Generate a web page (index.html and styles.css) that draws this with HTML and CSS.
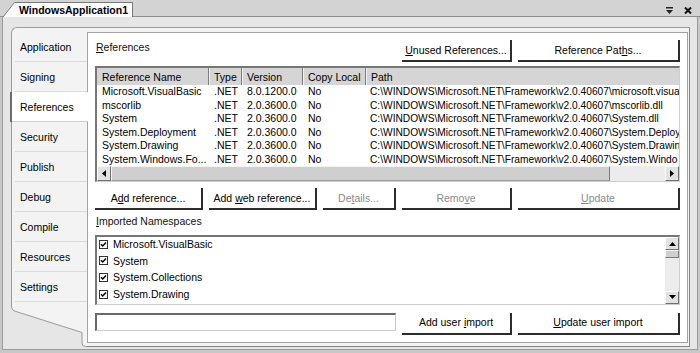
FILE: index.html
```html
<!DOCTYPE html>
<html lang="en">
<head>
    <meta charset="UTF-8">
    <meta name="viewport" content="width=device-width, initial-scale=1.0">
    <title>WindowsApplication1</title>
    <link rel="stylesheet" href="styles.css">
</head>
<body>
<div class="doc-bar">
    <div class="doc-tab">
        <svg class="doc-tab-slant" width="12" height="15" viewBox="0 0 12 15">
            <path d="M0 15 L11.5 0 H12 V15 Z" fill="#fbfbfb"/>
            <path d="M0 15 L11.5 0.5 H12" fill="none" stroke="#7a7a7a"/>
        </svg>
        WindowsApplication1
    </div>
    <div class="doc-tools">
        <svg width="7" height="7" viewBox="0 0 7 7">
            <rect x="0" y="0" width="7" height="1.5" fill="#222"/>
            <path d="M0 3 H7 L3.5 7 Z" fill="#222"/>
        </svg>
        <svg width="8" height="7" viewBox="0 0 8 7">
            <path d="M1 0.5 L7 6.5 M7 0.5 L1 6.5" stroke="#111" stroke-width="2"/>
        </svg>
    </div>
</div>

<div class="frame">
    <div class="designer">
        <ul class="side-tabs">
            <li class="first">Application</li>
            <li>Signing</li>
            <li class="selected">References</li>
            <li>Security</li>
            <li>Publish</li>
            <li>Debug</li>
            <li>Compile</li>
            <li>Resources</li>
            <li>Settings</li>
            <li class="side-tail">
                <svg width="76" height="45" viewBox="0 0 76 45">
                    <path d="M0 0 H1 V4 Q1 8 5 9 L71 30 Q71.5 30.2 71.5 31 V41 Q71.5 44 74.5 44 H76 V45 H0 Z" fill="#e6e6e6"/>
                    <path d="M0.5 0 V4 Q0.5 8.5 5 9.5 L71 30.5 V41 Q71 44.5 74.5 44.5 H76" fill="none" stroke="#9c9c9c"/>
                </svg>
            </li>
        </ul>

        <div class="panel">
            <div class="panel-head">
                <span class="group-label"><u>R</u>eferences</span>
                <div class="btn-group">
                    <button class="btn btn-lg"><u>U</u>nused References...</button>
                    <button class="btn btn-xl">Reference Pat<u>h</u>s...</button>
                </div>
            </div>

            <div class="ref-list">
                <table class="ref-table">
                    <colgroup>
                        <col style="width: 112px">
                        <col style="width: 33px">
                        <col style="width: 61px">
                        <col style="width: 63px">
                        <col>
                    </colgroup>
                    <thead>
                        <tr><th>Reference Name</th><th>Type</th><th>Version</th><th>Copy Local</th><th>Path</th></tr>
                    </thead>
                    <tbody>
                        <tr><td>Microsoft.VisualBasic</td><td>.NET</td><td>8.0.1200.0</td><td>No</td><td>C:\WINDOWS\Microsoft.NET\Framework\v2.0.40607\microsoft.visua</td></tr>
                        <tr><td>mscorlib</td><td>.NET</td><td>2.0.3600.0</td><td>No</td><td>C:\WINDOWS\Microsoft.NET\Framework\v2.0.40607\mscorlib.dll</td></tr>
                        <tr><td>System</td><td>.NET</td><td>2.0.3600.0</td><td>No</td><td>C:\WINDOWS\Microsoft.NET\Framework\v2.0.40607\System.dll</td></tr>
                        <tr><td>System.Deployment</td><td>.NET</td><td>2.0.3600.0</td><td>No</td><td>C:\WINDOWS\Microsoft.NET\Framework\v2.0.40607\System.Deploy</td></tr>
                        <tr><td>System.Drawing</td><td>.NET</td><td>2.0.3600.0</td><td>No</td><td>C:\WINDOWS\Microsoft.NET\Framework\v2.0.40607\System.Drawin</td></tr>
                        <tr><td>System.Windows.Fo...</td><td>.NET</td><td>2.0.3600.0</td><td>No</td><td>C:\WINDOWS\Microsoft.NET\Framework\v2.0.40607\System.Windo</td></tr>
                    </tbody>
                </table>
                <div class="hscroll">
                    <span class="sb-btn"><svg width="4" height="7" viewBox="0 0 4 7"><path d="M4 0 V7 L0 3.5 Z"/></svg></span>
                    <span class="sb-thumb"></span>
                    <span class="sb-track"></span>
                    <span class="sb-btn"><svg width="4" height="7" viewBox="0 0 4 7"><path d="M0 0 V7 L4 3.5 Z"/></svg></span>
                </div>
            </div>

            <div class="btn-row">
                <button class="btn btn-md">A<u>d</u>d reference...</button>
                <button class="btn btn-md">Add <u>w</u>eb reference...</button>
                <button class="btn btn-sm disabled">De<u>t</u>ails...</button>
                <button class="btn btn-lg disabled">Remo<u>v</u>e</button>
                <button class="btn btn-xl disabled"><u>U</u>pdate</button>
            </div>

            <div class="group-label ns-label"><u>I</u>mported Namespaces</div>

            <div class="ns-list">
                <ul class="ns-items">
                    <li><svg class="check" width="9" height="9" viewBox="0 0 9 9"><rect x="0.5" y="0.5" width="8" height="8" fill="#fff" stroke="#333"/><path d="M2 4.2 L3.7 6 L7 2.5" fill="none" stroke="#000" stroke-width="1.5"/></svg>Microsoft.VisualBasic</li>
                    <li><svg class="check" width="9" height="9" viewBox="0 0 9 9"><rect x="0.5" y="0.5" width="8" height="8" fill="#fff" stroke="#333"/><path d="M2 4.2 L3.7 6 L7 2.5" fill="none" stroke="#000" stroke-width="1.5"/></svg>System</li>
                    <li><svg class="check" width="9" height="9" viewBox="0 0 9 9"><rect x="0.5" y="0.5" width="8" height="8" fill="#fff" stroke="#333"/><path d="M2 4.2 L3.7 6 L7 2.5" fill="none" stroke="#000" stroke-width="1.5"/></svg>System.Collections</li>
                    <li><svg class="check" width="9" height="9" viewBox="0 0 9 9"><rect x="0.5" y="0.5" width="8" height="8" fill="#fff" stroke="#333"/><path d="M2 4.2 L3.7 6 L7 2.5" fill="none" stroke="#000" stroke-width="1.5"/></svg>System.Drawing</li>
                </ul>
                <div class="vscroll">
                    <span class="sb-btn"><svg width="7" height="4" viewBox="0 0 7 4"><path d="M0 4 H7 L3.5 0 Z"/></svg></span>
                    <span class="sb-thumb"></span>
                    <span class="sb-track"></span>
                    <span class="sb-btn"><svg width="7" height="4" viewBox="0 0 7 4"><path d="M0 0 H7 L3.5 4 Z"/></svg></span>
                </div>
            </div>

            <div class="btn-row import-row">
                <input type="text" class="import-box">
                <button class="btn btn-lg">Add user <u>i</u>mport</button>
                <button class="btn btn-xl"><u>U</u>pdate user import</button>
            </div>
        </div>
    </div>
</div>
</body>
</html>
```

FILE: styles.css
```css
body {
    margin: 0;
    width: 700px;
    height: 353px;
    overflow: hidden;
    background-color: #c8c8c8;
    font-family: "Liberation Sans", Arial, sans-serif;
    font-size: 10.5px;
    color: #000;
}

u {
    text-decoration: underline;
}

/* document tab strip */
.doc-bar {
    display: flex;
    align-items: flex-start;
    height: 16px;
    background-color: #d3d3d3;
    border-bottom: 1px solid #8e8e8e;
}

.doc-tab {
    position: relative;
    height: 15px;
    margin: 2px 0 -1px 15px;
    padding: 0 4px;
    background-color: #fbfbfb;
    border-top: 1px solid #7a7a7a;
    border-right: 1px solid #7a7a7a;
    box-sizing: border-box;
    font-weight: bold;
    line-height: 14px;
}

.doc-tab-slant {
    position: absolute;
    left: -12px;
    top: -1px;
    display: block;
}

.doc-tools {
    display: flex;
    gap: 11px;
    margin-left: auto;
    padding: 7px 8px 0 0;
}

.doc-tools svg {
    display: block;
}

/* designer frame */
.frame {
    margin: 0 2px;
    padding: 10px 7px 2px 8px;
    background-color: #e6e6e6;
    border: 1px solid #9c9c9c;
    border-top: none;
}

.designer {
    display: flex;
    height: 320px;
    box-sizing: border-box;
    padding: 0 1px 3px 0;
    background-color: #f3f3f3;
    border: 1px solid #9c9c9c;
    border-right-color: #868686;
    border-bottom-color: #868686;
    border-top-left-radius: 6px;
}

.side-tabs {
    display: flex;
    flex-direction: column;
    width: 75px;
    flex-shrink: 0;
    margin: 0;
    padding: 0;
    list-style: none;
}

.side-tabs li {
    height: 30px;
    padding-left: 8px;
    line-height: 30px;
    box-sizing: border-box;
    background: linear-gradient(#dadada, #dadada) 3px 100% / calc(100% - 3px) 1px no-repeat;
}

.side-tabs li.first {
    height: 34px;
    padding-top: 4px;
}

.side-tabs li.selected {
    position: relative;
    z-index: 1;
    margin: 0 -1px 0 -2px;
    background-color: #fff;
    border-left: 2px solid #6c6c6c;
    box-shadow: inset 0 -1px #d0d0d0;
}

.side-tabs li.side-tail {
    flex: 1;
    height: auto;
    padding: 0;
    margin: 0 0 -4px -1px;
    background: none;
}

.side-tail svg {
    display: block;
}

/* property page */
.panel {
    flex: 1;
    display: flex;
    flex-direction: column;
    margin-top: 4px;
    padding: 0 7px;
    background-color: #fff;
    border: 1px solid #a3a3a3;
}

.panel-head {
    display: flex;
    margin-top: 7px;
}

.group-label {
    padding-left: 1px;
    line-height: 14px;
    color: #111;
}

.btn-group {
    display: flex;
    gap: 6px;
    margin-left: auto;
}

.btn {
    height: 22px;
    padding: 0 0 1px 0;
    background-color: #fff;
    border: none;
    border-right: 2px solid #2c2c2c;
    border-bottom: 2px solid #2c2c2c;
    font: inherit;
    color: #000;
    text-align: center;
    box-sizing: border-box;
}

.btn.disabled {
    color: #8a8a8a;
}

.btn-sm { width: 73px; }
.btn-md { width: 108px; }
.btn-lg { width: 110px; }
.btn-xl { width: 162px; }

.btn-row {
    display: flex;
    gap: 6px;
    margin-top: 6px;
}

/* references list */
.ref-list {
    margin-top: 4px;
    border-top: 2px solid #767676;
    border-left: 2px solid #767676;
    border-right: 1px solid #cfcfcf;
    border-bottom: 1px solid #cfcfcf;
    overflow: hidden;
}

.ref-table {
    width: 100%;
    table-layout: fixed;
    border-spacing: 0;
}

.ref-table th,
.ref-table td {
    padding: 0 0 0 5px;
    white-space: nowrap;
    overflow: hidden;
    text-align: left;
}

.ref-table th {
    height: 17px;
    font-weight: normal;
    background-color: #d5d5d5;
    box-shadow: inset -1px 0 #7e7e7e, inset 1px 0 #f2f2f2;
}

.ref-table th:first-child {
    box-shadow: inset -1px 0 #7e7e7e;
}

.ref-table th:last-child {
    box-shadow: inset 1px 0 #f2f2f2;
}

.ref-table td {
    height: 13.5px;
    line-height: 13.5px;
}

.ref-table td:last-child {
    font-size: 10.2px;
    padding-left: 4px;
}

.hscroll {
    display: flex;
    height: 15px;
}

.sb-btn {
    display: flex;
    align-items: center;
    justify-content: center;
    width: 14px;
    box-sizing: border-box;
    background-color: #e2e2e2;
    border: 1px solid #fff;
    border-right-color: #707070;
    border-bottom-color: #707070;
}

.sb-btn svg {
    display: block;
    fill: #000;
}

.hscroll .sb-thumb {
    width: 499px;
    box-sizing: border-box;
    background-color: #cfcfcf;
    border: 1px solid #f4f4f4;
    border-right-color: #7a7a7a;
    border-bottom-color: #9a9a9a;
}

.sb-track {
    flex: 1;
    background-color: #ececec;
}

/* imported namespaces */
.ns-label {
    margin-top: 4.5px;
    line-height: 12px;
}

.ns-list {
    display: flex;
    margin-top: 8.5px;
    height: 69.8px;
    box-sizing: border-box;
    border-top: 2px solid #767676;
    border-left: 2px solid #767676;
    border-right: 1px solid #cfcfcf;
    border-bottom: 1px solid #cfcfcf;
}

.ns-items {
    flex: 1;
    margin: 0;
    padding: 0;
    list-style: none;
}

.ns-items li {
    display: flex;
    align-items: center;
    height: 14px;
    margin-bottom: 2.7px;
    padding-left: 2px;
}

.check {
    display: block;
    margin-right: 5px;
}

.vscroll {
    display: flex;
    flex-direction: column;
    width: 14px;
}

.vscroll .sb-btn {
    width: 14px;
    height: 13px;
}

.vscroll .sb-thumb {
    height: 8px;
    box-sizing: border-box;
    background-color: #cfcfcf;
    border: 1px solid #f4f4f4;
    border-right-color: #7a7a7a;
    border-bottom-color: #7a7a7a;
}

.import-row {
    margin-top: 8px;
}

.import-box {
    width: 301px;
    height: 18px;
    margin: 0;
    padding: 0;
    box-sizing: border-box;
    border-top: 2px solid #6a6a6a;
    border-left: 2px solid #6a6a6a;
    border-right: 1px solid #cacaca;
    border-bottom: 1px solid #cacaca;
    background-color: #fff;
}
```
